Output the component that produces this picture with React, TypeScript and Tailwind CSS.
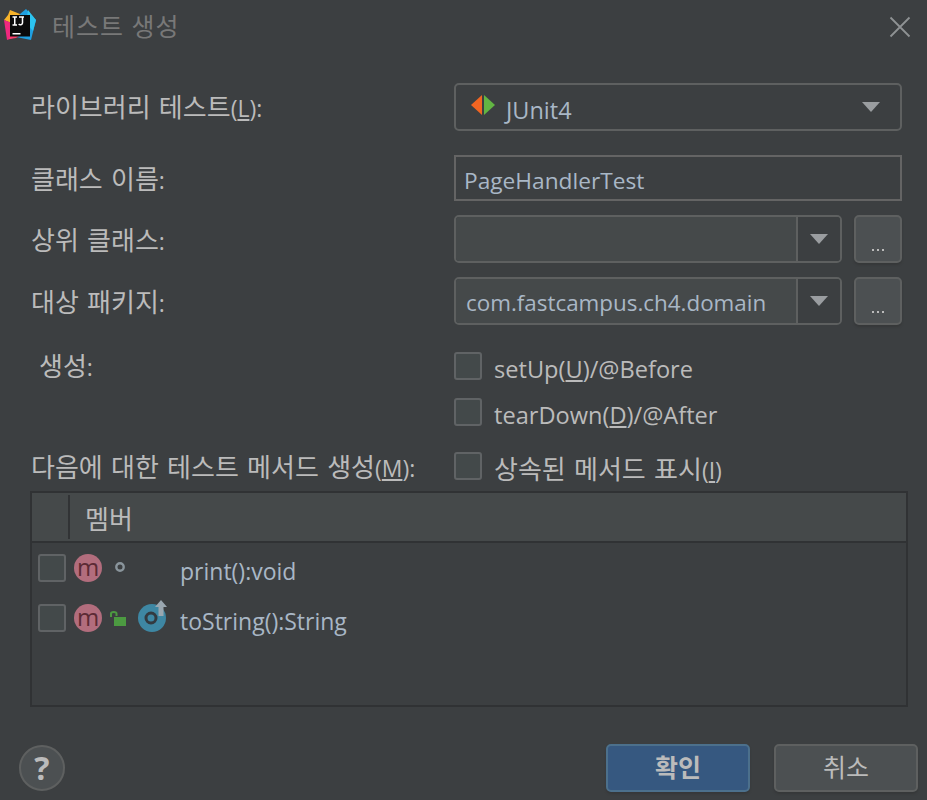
const uiFont = { fontFamily: '"Open Sans", "Noto Sans CJK KR", sans-serif' };

function Logo() {
  return (
    <svg width="32" height="32" viewBox="0 0 32 32" className="mb-[4px] block">
      <polygon points="22,0 32,11 27,31 12,28 16,5" fill="#1f9fe0" />
      <polygon points="24,1 32,11 29,22 22,14" fill="#2cc4f0" />
      <polygon points="6,1 16,5 12,16 0,11 4,6" fill="#f7b32b" />
      <polygon points="0,11 8,14 12,28 3,31" fill="#f0287f" />
      <polygon points="8,22 20,24 12,29 5,30" fill="#fd3f6b" />
      <rect x="6" y="6" width="20" height="21.5" fill="#0a0a0a" />
      <rect x="8.5" y="24" width="8" height="1.5" fill="#ffffff" />
      <path d="M8.5 8h4.5M10.75 8v8M8.5 16h4.5M15 8h5M18.5 8v6c0 1.8-2.6 2.4-3.8 1" fill="none" stroke="#ffffff" strokeWidth="1.5" />
    </svg>
  );
}

function Caret() {
  return (
    <svg width="18" height="11" viewBox="0 0 18 11" className="block">
      <polygon points="0,0 18,0 9,10" fill="#9a9da0" />
    </svg>
  );
}

function Check() {
  return <span className="block h-[28px] w-[28px] shrink-0 rounded-[3px] border-2 border-[#606365] bg-[#43494a]" />;
}

function Label({ children, className = "" }: { children: React.ReactNode; className?: string }) {
  return <span className={`text-[23px] leading-[32px] whitespace-nowrap text-[#bbbbbb] ${className}`}>{children}</span>;
}

// Korean runs sit a little larger than the Latin in the same label
function Ko({ children }: { children: React.ReactNode }) {
  return <span className="text-[26px] [word-spacing:1.5px]">{children}</span>;
}

function Combo({ value }: { value?: string }) {
  return (
    <div className="flex h-[48px] w-[388px] overflow-hidden rounded-[5px] border-2 border-[#5e6060]">
      <div className="flex-1 truncate bg-[#45494a] pl-[10px] pt-[8px] text-[22.4px] leading-[32px] text-[#a9b7c6]">{value}</div>
      <div className="flex w-[44px] items-center justify-center border-l-2 border-[#5e6060] bg-[#3c3f41]">
        <Caret />
      </div>
    </div>
  );
}

function DotsButton() {
  return (
    <div className="ml-[12px] flex h-[48px] w-[48px] items-end justify-center rounded-[5px] border-2 border-[#5e6060] bg-[#4c5052] pb-[10px] shadow-[0_2px_2px_#363839]">
      <span className="flex gap-[3px]">
        <i className="block h-[2px] w-[2px] bg-[#bbbbbb]" />
        <i className="block h-[2px] w-[2px] bg-[#bbbbbb]" />
        <i className="block h-[2px] w-[2px] bg-[#bbbbbb]" />
      </span>
    </div>
  );
}

function MethodBadge() {
  return (
    <span className="flex h-[28px] w-[28px] shrink-0 items-center justify-center rounded-full bg-[#b26d7d] pb-[2px] text-[24px] leading-none text-[#5c2a35]">
      m
    </span>
  );
}

function CheckRow({ children }: { children: React.ReactNode }) {
  return (
    <div className="flex">
      <Check />
      <span className="ml-[12px] mt-[1px] text-[23.6px] leading-[32px] whitespace-nowrap text-[#bbbbbb]">{children}</span>
    </div>
  );
}

export default function App() {
  return (
    <div className="h-[800px] w-[927px] overflow-hidden bg-[#3c3f41]" style={uiFont}>
      {/* Title bar */}
      <div className="flex h-[54px] items-center pl-[4px] pr-[16px]">
        <Logo />
        <span className="ml-[16px] text-[25px] tracking-[1px] text-[#787878]">테스트 생성</span>
        <svg width="22" height="22" viewBox="0 0 22 22" className="ml-auto">
          <path d="M1.5 1.5l19 19M20.5 1.5l-19 19" stroke="#8f9294" strokeWidth="1.8" fill="none" />
        </svg>
      </div>

      {/* Form */}
      <div className="pl-[31px] pr-[25px]">
        <div className="mt-[29px] flex h-[48px] items-center">
          <Label className="w-[423px]">
            <Ko>라이브러리 테스트</Ko>(<u>L</u>):
          </Label>
          <div className="flex h-[48px] w-[448px] items-center rounded-[5px] border-2 border-[#5e6060] pl-[14px] pr-[20px]">
            <svg width="26" height="22" viewBox="0 0 26 22" className="mb-[3px] block">
              <polygon points="12,0 12,20 1,10" fill="#f26522" />
              <polygon points="14,0 14,20 25,10" fill="#62b543" />
            </svg>
            <span className="ml-[10px] pt-[8px] text-[23.5px] text-[#a9b7c6]">JUnit4</span>
            <span className="ml-auto">
              <Caret />
            </span>
          </div>
        </div>

        <div className="mt-[24px] flex h-[46px] items-center">
          <Label className="w-[423px] pt-[2px]">
            <Ko>클래스 이름</Ko>:
          </Label>
          <div className="h-[46px] w-[448px] border-2 border-[#646464] pl-[8px] pt-[8px] text-[22.7px] leading-[32px] text-[#a9b7c6]">
            PageHandlerTest
          </div>
        </div>

        <div className="mt-[14px] flex h-[48px] items-center">
          <Label className="w-[423px] pt-[2px]">
            <Ko>상위 클래스</Ko>:
          </Label>
          <Combo />
          <DotsButton />
        </div>

        <div className="mt-[14px] flex h-[48px] items-center">
          <Label className="w-[423px] pt-[2px]">
            <Ko>대상 패키지</Ko>:
          </Label>
          <Combo value="com.fastcampus.ch4.domain" />
          <DotsButton />
        </div>

        <div className="mt-[27px] flex">
          <Label className="-mt-[2px] w-[423px] pl-[8px]">
            <Ko>생성</Ko>:
          </Label>
          <div className="flex flex-col gap-[13px]">
            <CheckRow>
              setUp(<u>U</u>)/@Before
            </CheckRow>
            <CheckRow>
              tearDown(<u>D</u>)/@After
            </CheckRow>
          </div>
        </div>

        <div className="mt-[21px] flex h-[28px] items-center">
          <Label className="w-[423px] pt-[2px]">
            <Ko>다음에 대한 테스트 메서드 생성</Ko>(<u>M</u>):
          </Label>
          <Check />
          <Label className="ml-[12px] pt-[6px]">
            <Ko>상속된 메서드 표시</Ko>(<u>I</u>)
          </Label>
        </div>
      </div>

      {/* Member table */}
      <div className="ml-[30px] mt-[11px] h-[216px] w-[878px] border-2 border-[#303234]">
        <div className="flex h-[50px] items-center border-b-2 border-[#303234] bg-[#45494a]">
          <span className="ml-[36px] h-[44px] w-[2px] bg-[#313335]" />
          <span className="ml-[15px] pt-[4px] text-[26px] leading-[32px] text-[#bbbbbb]">멤버</span>
        </div>
        <div className="flex h-[50px] items-center pl-[6px]">
          <Check />
          <span className="ml-[8px]">
            <MethodBadge />
          </span>
          <svg width="12" height="12" viewBox="0 0 12 12" className="mb-[2px] ml-[12px] block">
            <circle cx="6" cy="6" r="3.7" fill="none" stroke="#8a959c" strokeWidth="2.4" />
          </svg>
          <span className="ml-[54px] pt-[6px] text-[23px] text-[#a9b7c6]">print():void</span>
        </div>
        <div className="flex h-[50px] items-center pl-[6px]">
          <Check />
          <span className="ml-[8px]">
            <MethodBadge />
          </span>
          <svg width="18" height="18" viewBox="0 0 18 18" className="ml-[7px] block">
            <path d="M2 8V4.5C2 2.5 7.5 2.5 7.5 4.5V7" fill="none" stroke="#4c9a41" strokeWidth="2" />
            <rect x="5" y="8" width="12" height="9" fill="#4c9a41" />
          </svg>
          <svg width="32" height="34" viewBox="0 0 32 34" className="mb-[4px] ml-[10px] block">
            <circle cx="15" cy="19" r="14" fill="#3e87a3" />
            <circle cx="14" cy="19" r="5" fill="#3e87a3" stroke="#333a40" strokeWidth="3" />
            <path d="M24 1l6 7h-3.5v9h-5V8H18z" fill="#9aa7b0" />
          </svg>
          <span className="ml-[11px] pt-[6px] text-[23px] text-[#a9b7c6]">toString():String</span>
        </div>
      </div>

      {/* Footer */}
      <div className="mt-[37px] flex items-center pl-[19px] pr-[9px]">
        <div className="flex h-[46px] w-[46px] items-center justify-center rounded-full border-2 border-[#5e6060] bg-[#4c5052] text-[32px] leading-none font-bold text-[#bbbbbb]">
          ?
        </div>
        <button className="ml-auto h-[48px] w-[144px] rounded-[5px] border-2 border-[#4c708c] bg-[#365880] text-[25px] font-bold text-[#bbbbbb] shadow-[0_2px_2px_#363839]">
          확인
        </button>
        <button className="ml-[24px] h-[48px] w-[144px] rounded-[5px] border-2 border-[#5e6060] bg-[#4c5052] text-[25px] text-[#bbbbbb] shadow-[0_2px_2px_#363839]">
          취소
        </button>
      </div>
    </div>
  );
}
